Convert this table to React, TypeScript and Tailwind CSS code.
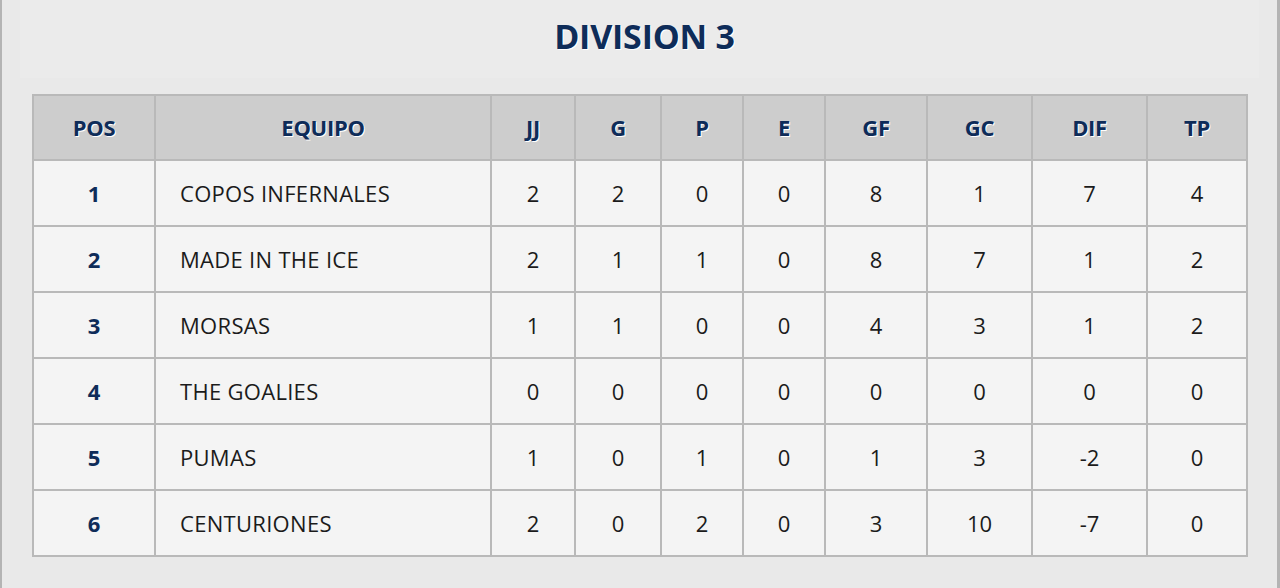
const columns = [
  { label: 'POS', width: 'w-[122px]' },
  { label: 'EQUIPO', width: 'w-[336px]' },
  { label: 'JJ', width: 'w-[84px]' },
  { label: 'G', width: 'w-[86px]' },
  { label: 'P', width: 'w-[82px]' },
  { label: 'E', width: 'w-[82px]' },
  { label: 'GF', width: 'w-[102px]' },
  { label: 'GC', width: 'w-[105px]' },
  { label: 'DIF', width: 'w-[115px]' },
  { label: 'TP', width: 'w-[100px]' },
]

const standings = [
  { pos: 1, team: 'COPOS INFERNALES', stats: [2, 2, 0, 0, 8, 1, 7, 4] },
  { pos: 2, team: 'MADE IN THE ICE', stats: [2, 1, 1, 0, 8, 7, 1, 2] },
  { pos: 3, team: 'MORSAS', stats: [1, 1, 0, 0, 4, 3, 1, 2] },
  { pos: 4, team: 'THE GOALIES', stats: [0, 0, 0, 0, 0, 0, 0, 0] },
  { pos: 5, team: 'PUMAS', stats: [1, 0, 1, 0, 1, 3, -2, 0] },
  { pos: 6, team: 'CENTURIONES', stats: [2, 0, 2, 0, 3, 10, -7, 0] },
]

function App() {
  return (
    <div className="min-h-[588px] w-[1280px] border-l-2 border-r-[3px] border-[#b4b4b4] bg-[#e9e9e9] font-['Open_Sans',sans-serif]">
      <div className="mx-[18px] flex h-[78px] items-center justify-center bg-[#ebebeb] pb-[6px] pl-[10px]">
        <h1 className="text-[34px] font-bold leading-none tracking-[-0.2px] text-[#0e2c59] [text-shadow:1px_1px_0_#fff]">
          DIVISION 3
        </h1>
      </div>

      <div className="pl-[30px] pr-[31px] pt-[16px] pb-[30px]">
        <table className="w-[1214px] table-fixed border-collapse">
          <thead>
            <tr className="h-[65px] bg-[#cdcdcd]">
              {columns.map((col) => (
                <th
                  key={col.label}
                  className={`${col.width} border-2 border-[#b9b9b9] text-center text-[22px] font-bold tracking-[-0.3px] text-[#0e2c59] [text-shadow:1px_1px_0_#fff]`}
                >
                  {col.label}
                </th>
              ))}
            </tr>
          </thead>
          <tbody>
            {standings.map((row) => (
              <tr key={row.pos} className="h-[66px] bg-[#f4f4f4]">
                <td className="border-2 border-[#b9b9b9] text-center text-[22px] font-bold text-[#0e2c59]">
                  {row.pos}
                </td>
                <td className="border-2 border-[#b9b9b9] pl-[24px] text-left text-[22px] tracking-[0.3px] text-[#1b1b1b]">
                  {row.team}
                </td>
                {row.stats.map((value, i) => (
                  <td
                    key={i}
                    className="border-2 border-[#b9b9b9] text-center text-[22px] text-[#1b1b1b]"
                  >
                    {value}
                  </td>
                ))}
              </tr>
            ))}
          </tbody>
        </table>
      </div>
    </div>
  )
}

export default App
